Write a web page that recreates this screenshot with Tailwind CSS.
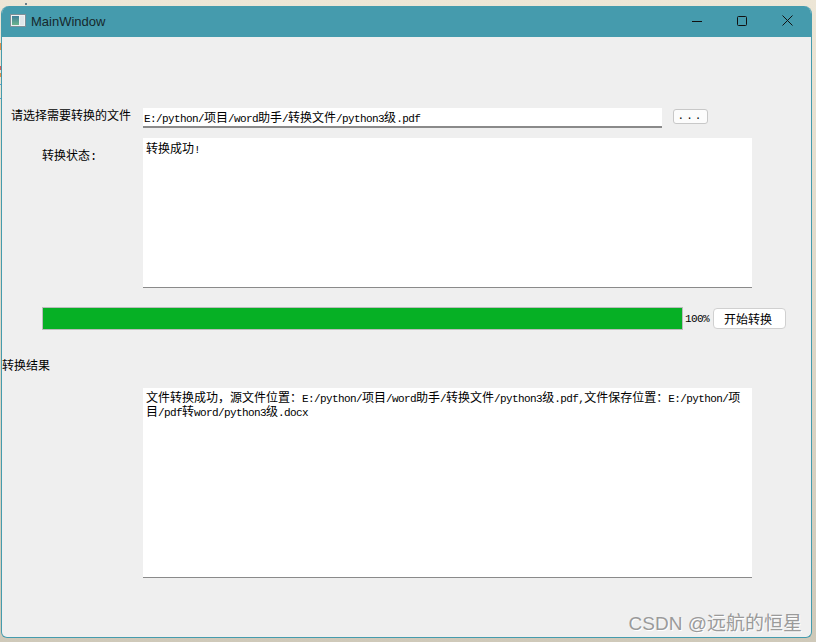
<!DOCTYPE html>
<html lang="zh">
<head>
<meta charset="utf-8">
<script src="https://cdn.jsdelivr.net/npm/@tailwindcss/browser@4"></script>
<title>MainWindow</title>
</head>
<body class="relative w-[816px] h-[642px] overflow-hidden bg-gradient-to-b from-[#ede6d6] to-[#cfc9b9] font-['Noto_Sans_CJK_SC',sans-serif] text-[12px] leading-[14px] text-black">
  <div class="absolute left-0 top-[43px] w-[1px] h-[7px] bg-[#e0904a]"></div>
  <div class="absolute left-0 top-[66px] w-[1px] h-[4px] bg-[#d0605a]"></div>
  <div class="absolute left-0 top-[73px] w-[1px] h-[4px] bg-[#e0904a]"></div>
  <div class="absolute left-0 top-[84px] w-[1px] h-[1px] bg-[#5aa0d0]"></div>
  <div class="absolute left-0 top-[98px] w-[1px] h-[1px] bg-[#5aa0d0]"></div>
  <div class="absolute left-[25px] top-[3px] w-[2px] h-[2px] bg-[#6a7f8a]"></div>
  <div class="relative ml-[1px] mt-[6px] w-[811px] h-[632px] flex flex-col rounded-t-[8px] rounded-b-[6px] overflow-hidden bg-[#efefef] border-x border-b border-[#459bad]">
    <div class="h-[31px] -mx-[1px] shrink-0 bg-[#459bad] flex items-center pl-[9px]">
      <svg width="16" height="13" viewBox="0 0 16 13" class="mt-[-2px]"><defs><linearGradient id="g" x1="0" y1="0" x2="0" y2="1"><stop offset="0" stop-color="#3f7f9a"/><stop offset="1" stop-color="#6cb48c"/></linearGradient></defs><rect x="0.5" y="0.5" width="15" height="12" fill="#eef2f3" stroke="#7f8f98"/><rect x="2" y="2" width="7" height="9" fill="url(#g)"/><rect x="10" y="2" width="4" height="9" fill="#dfe7ea"/></svg>
      <span class="ml-[5px] font-['Liberation_Sans',sans-serif] text-[13px] text-[#16282c] mt-[0px]">MainWindow</span>
      <div class="ml-auto flex items-center pr-[19px] mt-[-2px]">
        <svg width="10" height="10" viewBox="0 0 10 10"><path d="M0 5.5H10" stroke="#111" stroke-width="1"/></svg>
        <svg width="10" height="10" viewBox="0 0 10 10" class="ml-[35px]"><rect x="0.5" y="0.5" width="9" height="9" rx="1" fill="none" stroke="#111" stroke-width="1"/></svg>
        <svg width="11" height="11" viewBox="0 0 11 11" class="ml-[35px]"><path d="M0.5 0.5L10.5 10.5M10.5 0.5L0.5 10.5" stroke="#111" stroke-width="1"/></svg>
      </div>
    </div>

    <div class="mt-[71px] flex items-start">
      <div class="w-[141px] pl-[9px] whitespace-nowrap">请选择需要转换的文件</div>
      <div class="w-[519px] h-[20px] bg-white border-b-2 border-[#8a8a8a] pl-[1px] pt-[2px] whitespace-nowrap">
        <span class="font-['Liberation_Mono',monospace] text-[11px] tracking-[-0.6px]">E:/python/</span>项目<span class="font-['Liberation_Mono',monospace] text-[11px] tracking-[-0.6px]">/word</span>助手<span class="font-['Liberation_Mono',monospace] text-[11px] tracking-[-0.6px]">/</span>转换文件<span class="font-['Liberation_Mono',monospace] text-[11px] tracking-[-0.6px]">/python3</span>级<span class="font-['Liberation_Mono',monospace] text-[11px] tracking-[-0.6px]">.pdf</span>
      </div>
      <button class="ml-[11px] mt-[1px] w-[35px] h-[15px] bg-[#fcfcfc] border border-[#c8c8c8] rounded-[3px] text-[11px] leading-[13px] tracking-[2px] font-['Liberation_Mono',monospace] text-center">...</button>
    </div>

    <div class="mt-[10px] flex items-start">
      <div class="w-[141px] pl-[40px] pt-[10px] whitespace-nowrap">转换状态<span class="font-['Liberation_Mono',monospace]">:</span></div>
      <div class="w-[609px] h-[150px] bg-white border-b border-[#8a8a8a] pl-[3px] pt-[3px]">转换成功<span class="font-['Liberation_Mono',monospace] text-[11px]">!</span></div>
    </div>

    <div class="mt-[19px] flex items-center">
      <div class="ml-[40px] w-[641px] h-[23px] bg-[#06b025] border border-[#bcbcbc]"></div>
      <span class="ml-[2px] w-[29px] font-['Liberation_Mono',monospace] text-[11px] tracking-[-0.6px]">100%</span>
      <button class="-ml-[1px] w-[73px] h-[21px] bg-white border border-[#d0d0d0] rounded-[4px] text-[12px] leading-[14px] text-center pr-[3px]">开始转换</button>
    </div>

    <div class="mt-[28px] h-[14px] whitespace-nowrap">转换结果</div>

    <div class="mt-[16px] ml-[141px] w-[609px] h-[190px] bg-white border-b border-[#8a8a8a] pl-[3px] pt-[3px] pr-[4px] leading-[12px] break-all">文件转换成功，源文件位置：<span class="font-['Liberation_Mono',monospace] text-[11px] tracking-[-0.6px]">E:/python/</span>项目<span class="font-['Liberation_Mono',monospace] text-[11px] tracking-[-0.6px]">/word</span>助手<span class="font-['Liberation_Mono',monospace] text-[11px] tracking-[-0.6px]">/</span>转换文件<span class="font-['Liberation_Mono',monospace] text-[11px] tracking-[-0.6px]">/python3</span>级<span class="font-['Liberation_Mono',monospace] text-[11px] tracking-[-0.6px]">.pdf,</span>文件保存位置：<span class="font-['Liberation_Mono',monospace] text-[11px] tracking-[-0.6px]">E:/python/</span>项目<span class="font-['Liberation_Mono',monospace] text-[11px] tracking-[-0.6px]">/pdf</span>转<span class="font-['Liberation_Mono',monospace] text-[11px] tracking-[-0.6px]">word/python3</span>级<span class="font-['Liberation_Mono',monospace] text-[11px] tracking-[-0.6px]">.docx</span></div>

    <div class="absolute right-[9px] bottom-[2px] font-['Liberation_Sans','Noto_Sans_CJK_SC',sans-serif] text-[19px] leading-[22px] text-[#9a9a9a] whitespace-nowrap [text-shadow:1px_1px_0_#fff]">CSDN @远航的恒星</div>
  </div>
</body>
</html>
